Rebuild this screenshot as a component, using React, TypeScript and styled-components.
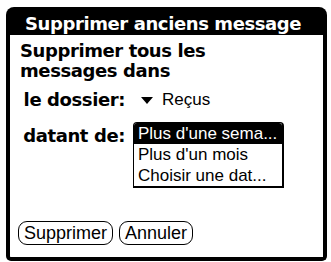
import React from "react";
import styled, { createGlobalStyle } from "styled-components";

const GlobalStyle = createGlobalStyle`
  html, body {
    margin: 0;
    padding: 0;
    background: #fff;
  }
  body {
    font-family: "Liberation Sans", Arial, sans-serif;
    color: #000;
  }
`;

const Dialog = styled.div`
  display: flex;
  flex-direction: column;
  width: 321px;
  height: 254px;
  margin: 7px 0 0 6px;
`;

const TitleBar = styled.div`
  height: 28px;
  box-sizing: border-box;
  padding: 5px 0 0 19px;
  background: #000;
  color: #fff;
  border-radius: 8px 8px 0 0;
  font-family: "DejaVu Sans", sans-serif;
  font-weight: bold;
  font-size: 18px;
  line-height: 23px;
  letter-spacing: -0.4px;
  white-space: nowrap;
`;

const Body = styled.div`
  flex: 1;
  display: flex;
  flex-direction: column;
  border: 4px solid #000;
  border-top: 0;
  border-radius: 0 0 5px 5px;
  padding: 6px 0 12px 8px;
`;

const Heading = styled.div`
  padding-left: 2px;
  font-family: "DejaVu Sans", sans-serif;
  font-weight: bold;
  font-size: 18px;
  line-height: 20px;
  letter-spacing: -0.4px;
`;

const Field = styled.div<{ $gap: number }>`
  display: grid;
  grid-template-columns: 107px auto;
  column-gap: 8px;
  align-items: start;
  margin-top: ${({ $gap }) => $gap}px;
`;

const Label = styled.div<{ $offset?: number }>`
  text-align: right;
  margin-top: ${({ $offset }) => $offset ?? 0}px;
  font-family: "DejaVu Sans", sans-serif;
  font-weight: bold;
  font-size: 18px;
  line-height: 20px;
  letter-spacing: -0.4px;
  white-space: nowrap;
`;

const Trigger = styled.div`
  display: flex;
  align-items: center;
  gap: 9px;
  padding-left: 8px;
  font-size: 17px;
  line-height: 20px;
`;

const List = styled.div`
  width: 148px;
  border: 1px solid #000;
  border-right-width: 2px;
  border-bottom-width: 2px;
  border-radius: 4px 4px 0 0;
  font-size: 17px;
`;

const Item = styled.div<{ $selected?: boolean }>`
  height: 21px;
  line-height: 21px;
  padding-left: 4px;
  white-space: nowrap;
  background: ${({ $selected }) => ($selected ? "#000" : "#fff")};
  color: ${({ $selected }) => ($selected ? "#fff" : "#000")};
  border-radius: ${({ $selected }) => ($selected ? "3px 3px 0 0" : "0")};
`;

const Spacer = styled.div`
  flex: 1;
`;

const Buttons = styled.div`
  display: flex;
  gap: 6px;
`;

const Button = styled.button`
  height: 24px;
  padding: 0 5px;
  border: 1.5px solid #000;
  border-radius: 9px;
  background: #fff;
  color: #000;
  font-family: "Liberation Sans", Arial, sans-serif;
  font-size: 18px;
  line-height: 20px;
`;

const Arrow = () => (
  <svg width="12" height="7" viewBox="0 0 12 7">
    <path d="M0 0 H12 L6 7 Z" fill="#000" />
  </svg>
);

export default function App() {
  return (
    <>
      <GlobalStyle />
      <Dialog>
        <TitleBar>Supprimer anciens message</TitleBar>
        <Body>
          <Heading>
            Supprimer tous les
            <br />
            messages dans
          </Heading>
          <Field $gap={9}>
            <Label>le dossier:</Label>
            <Trigger>
              <Arrow />
              Reçus
            </Trigger>
          </Field>
          <Field $gap={12}>
            <Label $offset={4}>datant de:</Label>
            <List>
              <Item $selected>Plus d'une sema...</Item>
              <Item>Plus d'un mois</Item>
              <Item>Choisir une dat...</Item>
            </List>
          </Field>
          <Spacer />
          <Buttons>
            <Button>Supprimer</Button>
            <Button>Annuler</Button>
          </Buttons>
        </Body>
      </Dialog>
    </>
  );
}
